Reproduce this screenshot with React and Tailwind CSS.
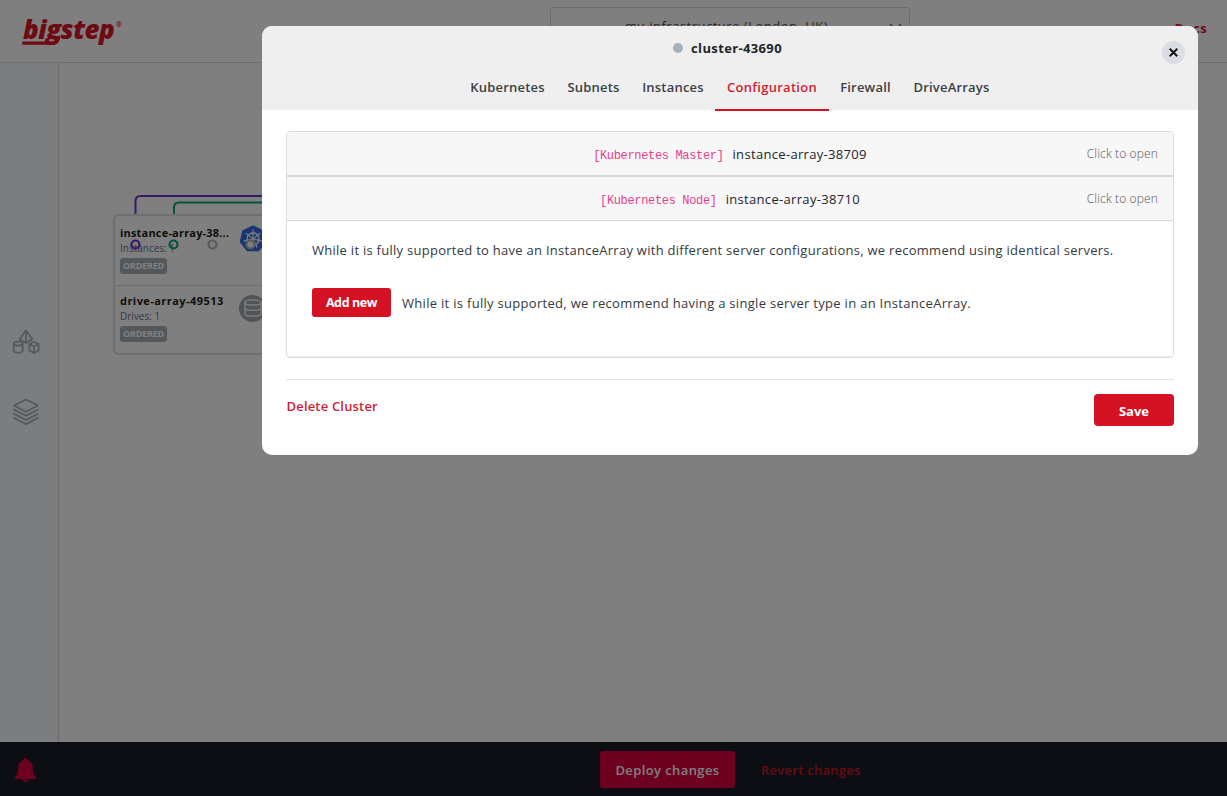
import React from "react";

const tabs = [
  { label: "Kubernetes", width: "w-[97px]" },
  { label: "Subnets", width: "w-[75px]" },
  { label: "Instances", width: "w-[84px]" },
  { label: "Configuration", width: "w-[114px]", active: true },
  { label: "Firewall", width: "w-[73px]" },
  { label: "DriveArrays", width: "w-[99px]" },
];

function Logo() {
  return (
    <div className="relative ml-[22px] h-[34px] w-[104px] text-[#dc1428]">
      <span className="absolute left-[1px] top-[1px] text-[26px] font-extrabold italic leading-[30px] tracking-[-0.5px]">
        bigstep
      </span>
      <span className="absolute left-[94px] top-[8px] text-[7px] font-bold leading-[8px]">®</span>
      <svg className="absolute left-0 top-[20px]" width="42" height="12" viewBox="0 0 42 12" fill="none">
        <path d="M0.3 10.200H31Q36 10.200 37 3" stroke="currentColor" strokeWidth="3.200" />
      </svg>
    </div>
  );
}

function ShapesIcon() {
  return (
    <svg width="28" height="26" viewBox="0 0 28 26" fill="none" stroke="#a4b2ba" strokeWidth="1.7" strokeLinejoin="round">
      <path d="M14 1.2 7.6 10.2 14 14 20.4 10.2Z M14 1.2V14" />
      <path d="M1.7 14.6V21.8C1.7 24.4 10.7 24.4 10.7 21.8V14.6" />
      <ellipse cx="6.2" cy="14.6" rx="4.5" ry="2" />
      <path d="M22 12.8 26.6 15V21.4L22 24 17.3 21.4V15Z M17.3 15 22 17.4 26.6 15 M22 17.4V24" />
    </svg>
  );
}

function LayersIcon() {
  return (
    <svg width="28" height="28" viewBox="0 0 28 28" fill="none" stroke="#a4b2ba" strokeWidth="1.7" strokeLinejoin="round">
      <path d="M14 1.5 26 7.6 14 13.8 2 7.6Z" />
      <path d="M1.3 11.3 14 17.8 26.7 11.3 M1.3 15.4 14 21.9 26.7 15.4 M1.3 19.6 14 26.3 26.7 19.6" />
    </svg>
  );
}

function KubernetesIcon() {
  const angles = [0, 51.43, 102.86, 154.29, 205.71, 257.14, 308.57];
  return (
    <svg width="28" height="28" viewBox="-14 -14 28 28">
      <path d="M0-12.500 9.800-7.800 12.200 2.800 5.400 11.300H-5.400L-12.200 2.800-9.800-7.800Z" fill="#326ce5" stroke="#326ce5" strokeWidth="2" strokeLinejoin="round" />
      <circle r="6" fill="none" stroke="#fff" strokeWidth="1.4" />
      {angles.map((a) => (
        <path key={a} d="M0-1.8V-9.4" stroke="#fff" strokeWidth="1.2" transform={`rotate(${a})`} />
      ))}
      <circle r="1.8" fill="#fff" />
    </svg>
  );
}

function DriveIcon() {
  return (
    <svg width="28" height="28" viewBox="0 0 28 28">
      <circle cx="13.500" cy="14.500" r="13.5" fill="#a3a8ac" />
      <g fill="none" stroke="#fff" strokeWidth="1.3">
        <ellipse cx="14" cy="8.4" rx="8" ry="2.6" />
        <path d="M6 8.4V19.4C6 23 22 23 22 19.4V8.4 M6 13.800C6 17.200 22 17.200 22 13.800" />
      </g>
    </svg>
  );
}

function Badge() {
  return (
    <span className="flex h-4 w-[47px] items-center justify-center rounded-[3px] bg-[#a4b0b9] text-[9px] font-bold tracking-[-0.2px] text-white">
      ORDERED
    </span>
  );
}

function InfrastructureCanvas() {
  return (
    <div className="relative flex-1 overflow-hidden bg-white">
      <svg className="absolute left-[54px] top-[121px]" width="180" height="40" viewBox="0 0 180 40" fill="none" strokeWidth="2">
        <path d="M22.500 31V17Q22.500 12 27.500 12H180" stroke="#7034c8" />
        <path d="M61 31V23.500Q61 18.500 66 18.500H180" stroke="#10a67c" />
      </svg>
      <div className="absolute left-[54px] top-[151px] flex h-[141px] w-[190px] flex-col rounded-[6px] border-2 border-[#e0e0e0] bg-white">
        <div className="flex h-[70px] shrink-0 flex-col border-b border-[#dcdcdc] pl-[5px] pt-[9px]">
          <span className="whitespace-nowrap text-[11px] font-bold leading-[15px] tracking-[0.19px] text-[#1c1c20]">
            instance-array-38...
          </span>
          <span className="mb-[3px] mt-px whitespace-nowrap text-[10px] leading-[14px] text-[#6e6e96]">Instances: 1</span>
          <Badge />
        </div>
        <div className="flex flex-1 flex-col pl-[5px] pt-[7px]">
          <span className="whitespace-nowrap text-[11px] font-bold leading-[15px] tracking-[0.44px] text-[#1c1c20]">
            drive-array-49513
          </span>
          <span className="mb-[3px] mt-px whitespace-nowrap text-[10px] leading-[14px] text-[#6e6e96]">Drives: 1</span>
          <Badge />
        </div>
      </div>
      <div className="absolute left-[180px] top-[162px]"><KubernetesIcon /></div>
      <div className="absolute left-[180px] top-[231px]"><DriveIcon /></div>
      <svg className="absolute left-[70px] top-[175px]" width="130" height="13" viewBox="0 0 130 13" strokeWidth="2.2" fill="none">
        <circle cx="6.5" cy="6.5" r="4" stroke="#7034c8" />
        <circle cx="44.5" cy="6.5" r="4" stroke="#10a67c" />
        <circle cx="83.5" cy="6.5" r="4" stroke="#b4b4b4" />
        <circle cx="121.5" cy="6.5" r="4" stroke="#b4b4b4" fill="#fff" />
      </svg>
    </div>
  );
}

function Backdrop() {
  return (
    <div className="flex h-[796px] flex-col">
      <header className="flex h-[63px] shrink-0 justify-between border-b border-[#dadada] bg-white">
        <div className="w-[550px] pt-[13px]"><Logo /></div>
        <div className="mt-[7px] flex h-[40px] w-[360px] items-center justify-between rounded-[3px] border border-[#dadada] pl-[74px] pr-[7px] text-[13px] tracking-[0.5px] text-[#505050]">
          <span className="whitespace-nowrap">my-infrastructure (London, UK)</span>
          <svg width="13" height="8" viewBox="0 0 13 8" fill="none" stroke="#505050" strokeWidth="1.2">
            <path d="M1 1 6.5 6.5 12 1" />
          </svg>
        </div>
        <div className="flex w-[317px] justify-end pr-[20px] pt-[19px] text-[13px] font-bold leading-[19px] tracking-[0.4px] text-[#dc1428]">
          Docs
        </div>
      </header>
      <div className="flex flex-1">
        <aside className="flex w-[59px] shrink-0 flex-col border-r border-[#d8d8d8] bg-[#f8fbff] pl-3">
          <div className="mt-[266px]"><ShapesIcon /></div>
          <div className="mt-[43px]"><LayersIcon /></div>
        </aside>
        <InfrastructureCanvas />
      </div>
      <footer className="flex h-[54px] shrink-0 items-center bg-[#1a1c26] pt-px">
        <svg className="ml-[14px]" width="24" height="26" viewBox="0 0 24 26" fill="#dc0040">
          <circle cx="11.5" cy="2.6" r="1.7" />
          <path d="M11.5 2.6C7 3.2 4.6 6 4.3 10 4 15.500 3.600 17.500 1.300 19.800 .6 21 1.200 22.200 2.300 22.200H20.700C21.800 22.200 22.400 21 21.700 19.800 19.400 17.500 19 15.500 18.700 10 18.400 6 16 3.200 11.500 2.600Z" />
          <path d="M8.700 22.500a2.800 2.400 0 0 0 5.600 0Z" />
        </svg>
        <button className="ml-[562px] h-[37px] w-[135px] rounded-[3px] bg-[#dc0040] pt-[2px] text-[13px] font-semibold tracking-[0.4px] text-white">
          Deploy changes
        </button>
        <span className="ml-[26px] pt-[2px] text-[13px] font-semibold tracking-[0.27px] text-[#cc1828]">Revert changes</span>
      </footer>
    </div>
  );
}

function ArrayRow({ role, name }) {
  return (
    <div className="grid h-[43px] shrink-0 grid-cols-[1fr_auto_1fr] items-center bg-[#f7f7f7] pr-[15px]">
      <span />
      <span className="flex items-center gap-[9px] whitespace-nowrap pl-[15px] pt-[2px]">
        <code className="pt-[2px] font-['Liberation_Mono',monospace] text-[12px] tracking-[-0.34px] text-[#e83e8c]">{role}</code>
        <span className="text-[13px] tracking-[0.32px] text-[#212529]">{name}</span>
      </span>
      <span className="text-right text-[12px] font-light tracking-[0.13px] text-[#555]">Click to open</span>
    </div>
  );
}

function ClusterDialog() {
  return (
    <div className="absolute left-[262px] top-[26px] flex h-[429px] w-[936px] flex-col rounded-[10px] bg-white text-[#212529]">
      <div className="relative flex h-[84px] shrink-0 flex-col items-center justify-between rounded-t-[10px] bg-[#efefef]">
        <div className="flex items-center gap-2 pr-[5px] pt-[12px]">
          <span className="size-[10px] rounded-full bg-[#a4b3bb]" />
          <h1 className="text-[13px] font-bold leading-[20px] tracking-[0.36px]">cluster-43690</h1>
        </div>
        <nav className="-mb-px flex">
          {tabs.map((t) => (
            <button
              key={t.label}
              className={`${t.width} h-[37px] whitespace-nowrap border-b-2 pb-[9px] text-[13px] font-semibold leading-[26px] ${
                t.active ? "border-[#d41224] tracking-[0.28px] text-[#d41c30]" : "border-transparent tracking-[0.2px] text-[#3a3f45]"
              }`}
            >
              {t.label}
            </button>
          ))}
        </nav>
        <button className="absolute right-[13px] top-[15px] flex size-[23px] items-center justify-center rounded-full bg-[#dadde4]">
          <svg width="9" height="9" viewBox="0 0 10 10" stroke="#111" strokeWidth="2.1">
            <path d="M.8.8 9.200 9.200M9.200.8.8 9.200" />
          </svg>
        </button>
      </div>

      <div className="flex flex-col px-6 pt-[21px]">
        <div className="flex h-[227px] flex-col overflow-hidden rounded-[4px] border border-[#dcdcdc]">
          <ArrayRow role="[Kubernetes Master]" name="instance-array-38709" />
          <div className="flex flex-col border-b border-t-2 border-[#d8d8d8]">
            <ArrayRow role="[Kubernetes Node]" name="instance-array-38710" />
          </div>
          <div className="flex flex-1 flex-col border-b border-[#ececec] px-[25px] pt-[19px] text-[13px] text-[#343a40]">
            <p className="whitespace-nowrap leading-[20px] tracking-[0.27px]">
              While it is fully supported to have an InstanceArray with different server configurations, we recommend using
              identical servers.
            </p>
            <div className="mt-[28px] flex items-center gap-[11px]">
              <button className="h-[29px] w-[79px] rounded-[3px] bg-[#d41224] pt-[2px] text-[12.5px] font-bold tracking-[-0.4px] text-white">
                Add new
              </button>
              <p className="whitespace-nowrap pt-[3px] tracking-[0.3px]">
                While it is fully supported, we recommend having a single server type in an InstanceArray.
              </p>
            </div>
          </div>
        </div>
        <div className="mt-[21px] flex items-start justify-between border-t border-[#e4e4e4] pt-[14px]">
          <button className="pl-[0.5px] pt-[2px] text-[13px] font-semibold leading-[20px] tracking-[0.18px] text-[#d41c30]">
            Delete Cluster
          </button>
          <button className="h-[32px] w-[80px] rounded-[4px] bg-[#d41224] pt-[3px] text-[13px] font-bold text-white">Save</button>
        </div>
      </div>
    </div>
  );
}

export default function App() {
  return (
    <main className="relative h-[796px] w-[1227px] overflow-hidden bg-white font-['Open_Sans','Noto_Sans',sans-serif]">
      <Backdrop />
      <div className="absolute inset-0 bg-black/50" />
      <ClusterDialog />
    </main>
  );
}
